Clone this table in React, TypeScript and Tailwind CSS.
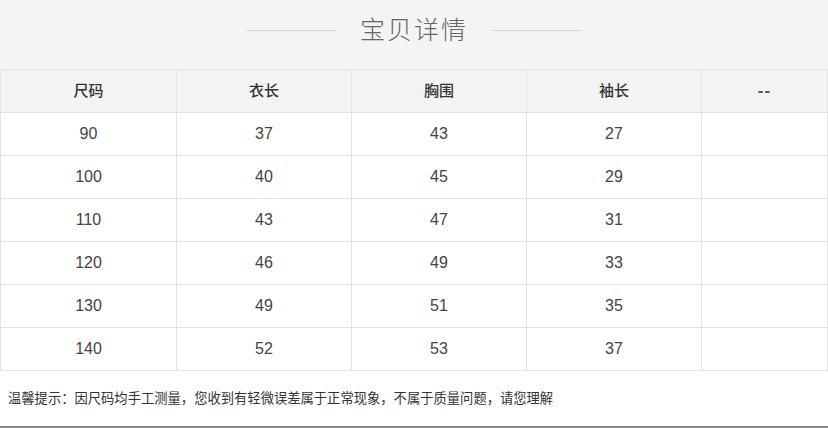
const headers = ["尺码", "衣长", "胸围", "袖长", "--"];

const rows = [
  ["90", "37", "43", "27", ""],
  ["100", "40", "45", "29", ""],
  ["110", "43", "47", "31", ""],
  ["120", "46", "49", "33", ""],
  ["130", "49", "51", "35", ""],
  ["140", "52", "53", "37", ""],
];

const cols = "grid grid-cols-[176px_175px_175px_175px_1fr]";

export default function App() {
  return (
    <div
      className="h-[428px] w-[828px] overflow-hidden bg-white"
      style={{ fontFamily: '"Liberation Sans", "Noto Sans CJK SC", sans-serif' }}
    >
      {/* Title */}
      <div className="flex h-[69px] items-center justify-center gap-6 bg-[#f4f4f4] pb-2">
        <div className="h-px w-[90px] bg-[#d6d6d6]" />
        <h1 className="text-[25px] font-light tracking-[2px] text-[#666]">
          宝贝详情
        </h1>
        <div className="h-px w-[90px] bg-[#d6d6d6]" />
      </div>

      {/* Size table */}
      <div className="border-l border-t border-[#e3e3e3]">
        <div className={`${cols} h-[43px] bg-[#f3f3f3]`}>
          {headers.map((h, i) => (
            <div
              key={i}
              className="flex items-center justify-center border-b border-r border-[#e3e3e3] text-[15px] font-medium text-[#333]"
            >
              {h === "--" ? (
                <span className="text-[17px] font-bold tracking-[1px] text-[#555]">--</span>
              ) : (
                h
              )}
            </div>
          ))}
        </div>

        {rows.map((row, r) => (
          <div key={r} className={`${cols} h-[43px] bg-white`}>
            {row.map((cell, i) => (
              <div
                key={i}
                className="flex items-center justify-center border-b border-r border-[#e3e3e3] text-[16px] text-[#444]"
              >
                {cell}
              </div>
            ))}
          </div>
        ))}
      </div>

      {/* Note */}
      <div className="flex h-[55px] items-center bg-white pl-2 text-[13.3px] text-[#333]">
        温馨提示：因尺码均手工测量，您收到有轻微误差属于正常现象，不属于质量问题，请您理解
      </div>
      <div className="h-[4px] bg-[#8a8a8a]" />
    </div>
  );
}
